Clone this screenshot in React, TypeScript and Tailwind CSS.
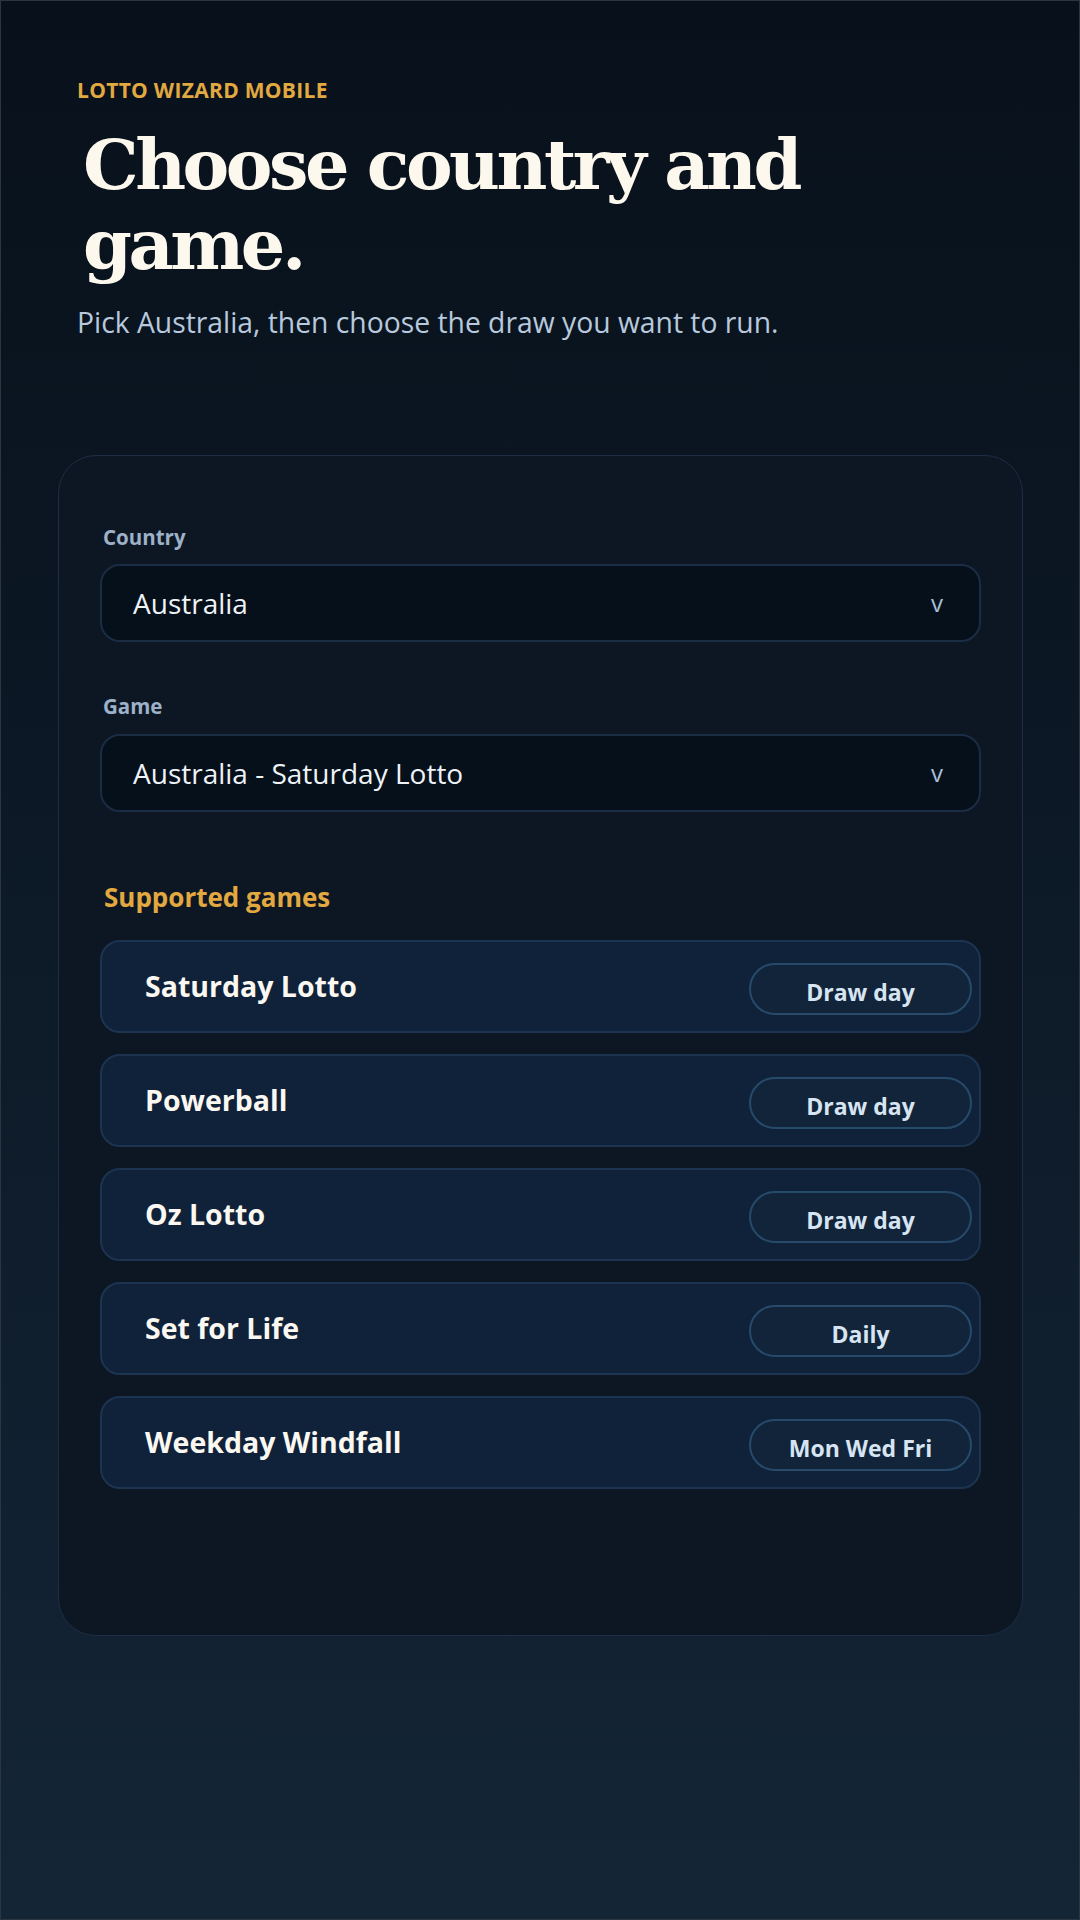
import React from "react";

const games = [
  { name: "Saturday Lotto", day: "Draw day" },
  { name: "Powerball", day: "Draw day" },
  { name: "Oz Lotto", day: "Draw day" },
  { name: "Set for Life", day: "Daily" },
  { name: "Weekday Windfall", day: "Mon Wed Fri" },
];

function Select({ value }: { value: string }) {
  return (
    <div className="flex h-[78px] items-center justify-between rounded-[20px] border-2 border-[#1a2d44] bg-[#06101a] pl-[31px] pr-[36px]">
      <span className="text-[28px] text-[#eef3f8]">{value}</span>
      <span className="text-[24px] text-[#a9bfd8]">v</span>
    </div>
  );
}

export default function App() {
  return (
    <div
      className="min-h-[1920px] w-full border border-[#2c3641] bg-[linear-gradient(180deg,#08111b_0%,#0c1825_40%,#142536_100%)] pl-[57px] pr-[56px] pt-[74px] pb-[10px]"
      style={{ fontFamily: '"Open Sans", "Noto Sans", sans-serif' }}
    >
      <header className="px-[19px]">
        <p className="text-[21px] font-bold leading-[30px] tracking-[0.3px] text-[#e3a941]">LOTTO WIZARD MOBILE</p>
        <h1
          className="mt-[20px] pl-[6px] text-[70px] font-bold leading-[80px] tracking-[-3.5px] text-[#fdf8ee]"
          style={{ fontFamily: 'Georgia, "DejaVu Serif", serif' }}
        >
          Choose country and
          <br />
          game.
        </h1>
        <p className="mt-[19px] text-[28.3px] leading-[36px] text-[#b8c9dd]">
          Pick Australia, then choose the draw you want to run.
        </p>
      </header>

      <section className="mt-[115px] rounded-[38px] border border-[#1d2e44] bg-[#0d1724] px-[41px] pt-[67px] pb-[146px]">
        <label className="block pl-[3px] text-[20.5px] font-bold leading-[28px] text-[#9db1c8]">Country</label>
        <div className="mt-[13px]">
          <Select value="Australia" />
        </div>

        <label className="mt-[50px] block pl-[3px] text-[20.5px] font-bold leading-[28px] text-[#9db1c8]">Game</label>
        <div className="mt-[14px]">
          <Select value="Australia - Saturday Lotto" />
        </div>

        <h2 className="mt-[68px] pl-[4px] text-[26px] font-bold leading-[34px] text-[#e3a941]">Supported games</h2>

        <ul className="mt-[26px] flex flex-col gap-[21px]">
          {games.map((g) => (
            <li
              key={g.name}
              className="flex h-[93px] items-center justify-between rounded-[20px] border-2 border-[#1c3450] bg-[#10223a] pl-[43px] pr-[7px]"
            >
              <span className="text-[28.5px] font-bold text-[#fbf8f2]">{g.name}</span>
              <span className="mt-[4px] flex h-[52px] w-[223px] items-center justify-center rounded-full border-2 border-[#264a6a] bg-[#12243a] pt-[8px] text-[23px] font-bold text-[#d7e5f3]">
                {g.day}
              </span>
            </li>
          ))}
        </ul>
      </section>
    </div>
  );
}
